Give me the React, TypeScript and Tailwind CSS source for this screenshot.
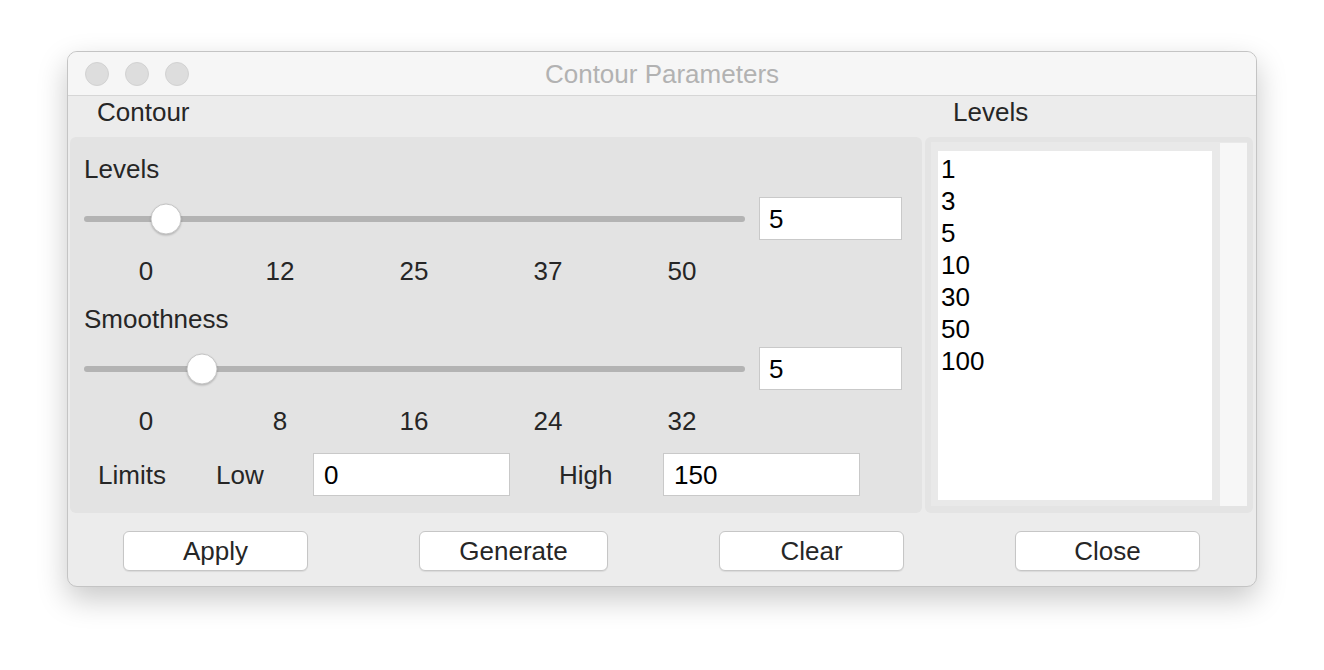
import React from "react";

const font = { fontFamily: '"Liberation Sans", Arial, sans-serif' };

function Slider({ pos }: { pos: number }) {
  return (
    <div className="flex h-[43px] items-center">
      <div className="relative h-[6px] w-[661px] rounded-full bg-[#b3b3b3]">
        <div
          className="absolute top-1/2 h-[31px] w-[31px] -translate-x-1/2 -translate-y-1/2 rounded-full border border-[#c4c4c4] bg-white shadow-[0_1px_2px_rgba(0,0,0,0.2)]"
          style={{ left: pos }}
        />
      </div>
      <div className="ml-[14px] flex h-[43px] w-[143px] items-center border border-[#c9c9c9] bg-white pl-[9px] text-black">
        5
      </div>
    </div>
  );
}

function Ticks({ labels }: { labels: string[] }) {
  return (
    <div className="ml-[-5px] flex h-[32px] items-center text-[#262626]">
      {labels.map((l) => (
        <div key={l} className="w-[134px] text-center">
          {l}
        </div>
      ))}
    </div>
  );
}

function Button({ label, w }: { label: string; w: string }) {
  return (
    <div
      className={`flex h-[40px] ${w} items-center justify-center rounded-[6px] border border-[#c6c6c6] bg-white text-[#262626] shadow-[0_1px_1px_rgba(0,0,0,0.08)]`}
    >
      {label}
    </div>
  );
}

export default function App() {
  return (
    <div
      className="min-h-[670px] w-[1324px] bg-white pl-[67px] pt-[51px] text-[26px] leading-[32px]"
      style={font}
    >
      <div className="flex h-[536px] w-[1190px] flex-col overflow-hidden rounded-[10px] border border-[#c4c4c4] bg-[#ececec] shadow-[0_12px_30px_rgba(0,0,0,0.22)]">
        {/* title bar */}
        <div className="relative flex h-[44px] shrink-0 items-center justify-center border-b border-[#d6d6d6] bg-[#f6f6f6]">
          <div className="absolute left-[17px] top-[10px] flex gap-[16px]">
            <div className="h-[24px] w-[24px] rounded-full border border-[#d2d2d2] bg-[#dddddd]" />
            <div className="h-[24px] w-[24px] rounded-full border border-[#d2d2d2] bg-[#dddddd]" />
            <div className="h-[24px] w-[24px] rounded-full border border-[#d2d2d2] bg-[#dddddd]" />
          </div>
          <span className="text-[#b2b2b2]">Contour Parameters</span>
        </div>

        {/* headers */}
        <div className="flex h-[41px] shrink-0 items-start text-[#262626]">
          <div className="w-[858px] pl-[29px]">Contour</div>
          <div className="pl-[27px]">Levels</div>
        </div>

        {/* boxes */}
        <div className="flex h-[376px] shrink-0 gap-[3px] px-[2px]">
          <div className="flex w-[852px] flex-col rounded-[6px] bg-[#e3e3e3] px-[14px] pt-[16px] text-[#262626]">
            <div className="h-[32px]">Levels</div>
            <div className="mt-[12px]">
              <Slider pos={82} />
            </div>
            <div className="mt-[15px]">
              <Ticks labels={["0", "12", "25", "37", "50"]} />
            </div>
            <div className="mt-[16px] h-[32px]">Smoothness</div>
            <div className="mt-[12px]">
              <Slider pos={118} />
            </div>
            <div className="mt-[15px]">
              <Ticks labels={["0", "8", "16", "24", "32"]} />
            </div>
            <div className="mt-[16px] flex h-[43px] items-center">
              <span className="w-[132px] pl-[14px]">Limits</span>
              <span className="w-[97px]">Low</span>
              <div className="flex h-[43px] w-[197px] items-center border border-[#c9c9c9] bg-white pl-[10px] text-black">
                0
              </div>
              <span className="ml-[49px] w-[104px]">High</span>
              <div className="flex h-[43px] w-[197px] items-center border border-[#c9c9c9] bg-white pl-[10px] text-black">
                150
              </div>
            </div>
          </div>

          <div className="w-[328px] rounded-[6px] bg-[#e4e4e4] pb-[7px] pl-[6px] pr-[6px] pt-[5px]">
            <div className="flex h-full bg-[#e9e9e9]">
              <div className="ml-[7px] mt-[9px] mb-[6px] w-[274px] bg-white pl-[3px] pt-[2px] text-black">
                {["1", "3", "5", "10", "30", "50", "100"].map((v) => (
                  <div key={v} className="h-[32px]">
                    {v}
                  </div>
                ))}
              </div>
              <div className="ml-[8px] mt-[1px] w-[27px] bg-[#f7f7f7]" />
            </div>
          </div>
        </div>

        {/* buttons */}
        <div className="flex gap-[111px] pl-[55px] pt-[18px]">
          <Button label="Apply" w="w-[185px]" />
          <Button label="Generate" w="w-[189px]" />
          <Button label="Clear" w="w-[185px]" />
          <Button label="Close" w="w-[185px]" />
        </div>
      </div>
    </div>
  );
}
